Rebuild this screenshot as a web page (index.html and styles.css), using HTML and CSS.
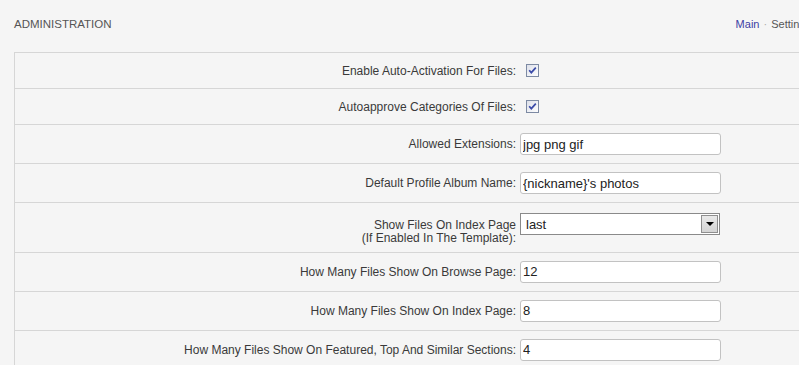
FILE: index.html
```html
<!DOCTYPE html>
<html lang="en">
  <head>
    <meta charset="utf-8" />
    <title>Administration - Settings</title>
    <link rel="stylesheet" href="styles.css">
  </head>
  <body>
    <div class="page">
      <!-- header -->
      <div class="page-head">
        <div class="page-title">ADMINISTRATION</div>
        <div class="crumbs">
          <a href="#" class="crumb-link">Main</a>
          <span class="crumb-sep">&middot;</span>
          <span class="crumb-current">Settings</span>
        </div>
      </div>

      <!-- settings form -->
      <form class="settings">
        <div class="row">
          <label class="row-label" for="auto-activation">Enable Auto-Activation For Files:</label>
          <div class="row-value">
            <span class="check" id="auto-activation" role="checkbox" aria-checked="true">
              <svg width="13" height="13" viewBox="0 0 13 13">
                <defs>
                  <linearGradient id="cbg" x1="0" y1="0" x2="1" y2="1">
                    <stop offset="0" stop-color="#dcdfe9" />
                    <stop offset="1" stop-color="#ffffff" />
                  </linearGradient>
                </defs>
                <rect x="0.5" y="0.5" width="12" height="12" fill="url(#cbg)" stroke="#7d8aa3" />
                <path d="M3.2 6.2 L5.3 8.6 L9.8 3.6" fill="none" stroke="#3a4aa8" stroke-width="1.7" />
              </svg>
            </span>
          </div>
        </div>

        <div class="row">
          <label class="row-label" for="auto-approve">Autoapprove Categories Of Files:</label>
          <div class="row-value">
            <span class="check" id="auto-approve" role="checkbox" aria-checked="true">
              <svg width="13" height="13" viewBox="0 0 13 13">
                <rect x="0.5" y="0.5" width="12" height="12" fill="url(#cbg)" stroke="#7d8aa3" />
                <path d="M3.2 6.2 L5.3 8.6 L9.8 3.6" fill="none" stroke="#3a4aa8" stroke-width="1.7" />
              </svg>
            </span>
          </div>
        </div>

        <div class="row">
          <label class="row-label" for="extensions">Allowed Extensions:</label>
          <div class="row-value">
            <input class="field" id="extensions" type="text" value="jpg png gif" />
          </div>
        </div>

        <div class="row">
          <label class="row-label" for="album-name">Default Profile Album Name:</label>
          <div class="row-value">
            <input class="field" id="album-name" type="text" value="{nickname}'s photos" />
          </div>
        </div>

        <div class="row row-tall">
          <label class="row-label" for="index-files">Show Files On Index Page<br />(If Enabled In The Template):</label>
          <div class="row-value">
            <div class="select-wrap">
              <select class="field-select" id="index-files">
                <option>last</option>
                <option>top</option>
                <option>featured</option>
              </select>
              <span class="select-btn"><span class="select-arrow"></span></span>
            </div>
          </div>
        </div>

        <div class="row">
          <label class="row-label" for="browse-count">How Many Files Show On Browse Page:</label>
          <div class="row-value">
            <input class="field" id="browse-count" type="text" value="12" />
          </div>
        </div>

        <div class="row">
          <label class="row-label" for="index-count">How Many Files Show On Index Page:</label>
          <div class="row-value">
            <input class="field" id="index-count" type="text" value="8" />
          </div>
        </div>

        <div class="row">
          <label class="row-label" for="featured-count">How Many Files Show On Featured, Top And Similar Sections:</label>
          <div class="row-value">
            <input class="field" id="featured-count" type="text" value="4" />
          </div>
        </div>
      </form>
    </div>
  </body>
</html>
```

FILE: styles.css
```css
html,
body {
  margin: 0;
  background-color: #f5f5f5;
  overflow: hidden;
}
.page {
  width: 797px;
  padding-left: 14px;
  font-family: "Liberation Sans", Arial, sans-serif;
  color: #3a3a3a;
}
.page-head {
  display: flex;
  justify-content: space-between;
  align-items: center;
  padding-top: 18px;
  margin-bottom: 21px;
  font-size: 11px;
  line-height: 13px;
}
.page-title {
  color: #555;
  font-size: 11.5px;
}
.crumbs {
  color: #555;
  white-space: nowrap;
}
.crumb-link {
  color: #3d3da3;
  text-decoration: none;
}
.crumb-sep {
  color: #aaa;
  margin: 0 1px;
}
.settings {
  margin: 0;
  border-left: 1px solid #d6d6d6;
  border-top: 1px solid #d6d6d6;
}
.row {
  display: grid;
  grid-template-columns: 501px 1fr;
  column-gap: 4px;
  align-items: center;
  padding: 8px 0;
  border-bottom: 1px solid #d6d6d6;
  font-size: 12px;
  line-height: 14px;
}
.row-tall {
  align-items: baseline;
  padding: 10px 0 7px;
  line-height: 13px;
}
.row-label {
  text-align: right;
}
.row-value {
  display: flex;
  align-items: center;
}
.check {
  display: block;
  width: 13px;
  height: 13px;
  margin: 3px 0 3px 6px;
}
.check svg {
  display: block;
}
.field {
  box-sizing: border-box;
  width: 201px;
  height: 22px;
  padding: 0 2px;
  border: 1px solid #c2c2c2;
  border-radius: 3px;
  background: #fff;
  font-family: "Liberation Sans", Arial, sans-serif;
  font-size: 13px;
  color: #222;
  outline: none;
}
.select-wrap {
  position: relative;
  width: 200px;
  height: 22px;
}
.field-select {
  -webkit-appearance: none;
  appearance: none;
  box-sizing: border-box;
  width: 200px;
  height: 22px;
  padding: 0 0 0 5px;
  border: 1px solid #8a8a8a;
  border-radius: 0;
  background: #fff;
  font-family: "Liberation Sans", Arial, sans-serif;
  font-size: 13px;
  color: #222;
  outline: none;
}
.select-btn {
  position: absolute;
  top: 2px;
  right: 2px;
  box-sizing: border-box;
  width: 17px;
  height: 18px;
  border: 1px solid #8f8f8f;
  background: linear-gradient(#e9e9e9, #d4d4d4);
  display: flex;
  align-items: center;
  justify-content: center;
  pointer-events: none;
}
.select-arrow {
  width: 0;
  height: 0;
  border-left: 4px solid transparent;
  border-right: 4px solid transparent;
  border-top: 4px solid #000;
}
```
